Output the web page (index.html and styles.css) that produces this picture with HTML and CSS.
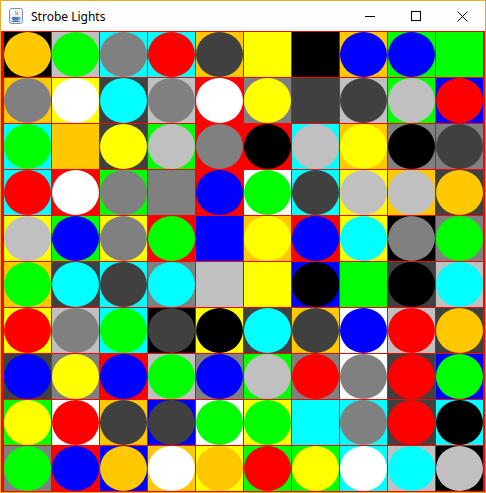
FILE: index.html
```html
<!DOCTYPE html>
<html>
<head>
<meta charset="utf-8">
<title>Strobe Lights</title>
<link rel="stylesheet" href="styles.css">
</head>
<body>
<div class="window">
  <div class="titlebar">
    <svg class="app-icon" width="16" height="16" viewBox="0 0 16 16">
      <rect x="1.5" y="0.5" width="13" height="15" rx="2" fill="#e4ecf3" stroke="#7f93a8"/>
      <rect x="2.5" y="1.5" width="11" height="6" fill="#f4f8fb"/>
      <path d="M8 2.5 C6.5 4 9.5 5 7.5 7 M10 4 C9 5 10.5 6 9.5 7" fill="none" stroke="#e0702a" stroke-width="1"/>
      <path d="M4 9 L11 9 L10.5 12 C10 13 5 13 4.5 12 Z" fill="#4a78b8"/>
      <path d="M11 9.5 C12.5 9.5 12.5 11.5 10.7 11.5" fill="none" stroke="#4a78b8" stroke-width="1"/>
      <path d="M3.5 13.5 L12 13.5" stroke="#4a78b8" stroke-width="1"/>
    </svg>
    <span class="title">Strobe Lights</span>
    <div class="controls">
      <div class="ctl"><svg width="10" height="10" viewBox="0 0 10 10"><path d="M0 5.5 H10" stroke="#000" stroke-width="1"/></svg></div>
      <div class="ctl"><svg width="10" height="10" viewBox="0 0 10 10"><rect x="0.5" y="0.5" width="9" height="9" fill="none" stroke="#000" stroke-width="1"/></svg></div>
      <div class="ctl"><svg width="11" height="11" viewBox="0 0 11 11"><path d="M0.5 0.5 L10.5 10.5 M10.5 0.5 L0.5 10.5" stroke="#000" stroke-width="1"/></svg></div>
    </div>
  </div>
  <div class="grid">
    <!-- row 0 -->
    <div class="cell bk"><i class="dot or"></i></div>
    <div class="cell lg"><i class="dot gn"></i></div>
    <div class="cell cy"><i class="dot gr"></i></div>
    <div class="cell cy"><i class="dot rd"></i></div>
    <div class="cell or"><i class="dot dg"></i></div>
    <div class="cell ye"><i class="dot ye"></i></div>
    <div class="cell bk"><i class="dot bk"></i></div>
    <div class="cell or"><i class="dot bl"></i></div>
    <div class="cell gn"><i class="dot bl"></i></div>
    <div class="cell gn"><i class="dot gn"></i></div>
    <!-- row 1 -->
    <div class="cell or"><i class="dot gr"></i></div>
    <div class="cell ye"><i class="dot wh"></i></div>
    <div class="cell dg"><i class="dot cy"></i></div>
    <div class="cell lg"><i class="dot gr"></i></div>
    <div class="cell rd"><i class="dot wh"></i></div>
    <div class="cell gr"><i class="dot ye"></i></div>
    <div class="cell dg"><i class="dot dg"></i></div>
    <div class="cell lg"><i class="dot dg"></i></div>
    <div class="cell gn"><i class="dot lg"></i></div>
    <div class="cell bl"><i class="dot rd"></i></div>
    <!-- row 2 -->
    <div class="cell cy"><i class="dot gn"></i></div>
    <div class="cell or"><i class="dot or"></i></div>
    <div class="cell dg"><i class="dot ye"></i></div>
    <div class="cell gn"><i class="dot lg"></i></div>
    <div class="cell rd"><i class="dot gr"></i></div>
    <div class="cell rd"><i class="dot bk"></i></div>
    <div class="cell cy"><i class="dot lg"></i></div>
    <div class="cell or"><i class="dot ye"></i></div>
    <div class="cell gr"><i class="dot bk"></i></div>
    <div class="cell gr"><i class="dot dg"></i></div>
    <!-- row 3 -->
    <div class="cell cy"><i class="dot rd"></i></div>
    <div class="cell rd"><i class="dot wh"></i></div>
    <div class="cell gn"><i class="dot gr"></i></div>
    <div class="cell gr"><i class="dot gr"></i></div>
    <div class="cell rd"><i class="dot bl"></i></div>
    <div class="cell wh"><i class="dot gn"></i></div>
    <div class="cell cy"><i class="dot dg"></i></div>
    <div class="cell ye"><i class="dot lg"></i></div>
    <div class="cell or"><i class="dot lg"></i></div>
    <div class="cell dg"><i class="dot or"></i></div>
    <!-- row 4 -->
    <div class="cell ye"><i class="dot lg"></i></div>
    <div class="cell gn"><i class="dot bl"></i></div>
    <div class="cell ye"><i class="dot gr"></i></div>
    <div class="cell rd"><i class="dot gn"></i></div>
    <div class="cell bl"><i class="dot bl"></i></div>
    <div class="cell or"><i class="dot ye"></i></div>
    <div class="cell rd"><i class="dot bl"></i></div>
    <div class="cell ye"><i class="dot cy"></i></div>
    <div class="cell bk"><i class="dot gr"></i></div>
    <div class="cell gr"><i class="dot gn"></i></div>
    <!-- row 5 -->
    <div class="cell or"><i class="dot gn"></i></div>
    <div class="cell dg"><i class="dot cy"></i></div>
    <div class="cell cy"><i class="dot dg"></i></div>
    <div class="cell gr"><i class="dot cy"></i></div>
    <div class="cell lg"><i class="dot lg"></i></div>
    <div class="cell ye"><i class="dot ye"></i></div>
    <div class="cell bl"><i class="dot bk"></i></div>
    <div class="cell gn"><i class="dot gn"></i></div>
    <div class="cell dg"><i class="dot bk"></i></div>
    <div class="cell lg"><i class="dot cy"></i></div>
    <!-- row 6 -->
    <div class="cell ye"><i class="dot rd"></i></div>
    <div class="cell lg"><i class="dot gr"></i></div>
    <div class="cell cy"><i class="dot gn"></i></div>
    <div class="cell bk"><i class="dot dg"></i></div>
    <div class="cell ye"><i class="dot bk"></i></div>
    <div class="cell dg"><i class="dot cy"></i></div>
    <div class="cell or"><i class="dot dg"></i></div>
    <div class="cell wh"><i class="dot bl"></i></div>
    <div class="cell lg"><i class="dot rd"></i></div>
    <div class="cell dg"><i class="dot or"></i></div>
    <!-- row 7 -->
    <div class="cell dg"><i class="dot bl"></i></div>
    <div class="cell gr"><i class="dot ye"></i></div>
    <div class="cell rd"><i class="dot bl"></i></div>
    <div class="cell lg"><i class="dot gn"></i></div>
    <div class="cell gr"><i class="dot bl"></i></div>
    <div class="cell gn"><i class="dot lg"></i></div>
    <div class="cell gr"><i class="dot rd"></i></div>
    <div class="cell wh"><i class="dot gr"></i></div>
    <div class="cell dg"><i class="dot rd"></i></div>
    <div class="cell bl"><i class="dot gn"></i></div>
    <!-- row 8 -->
    <div class="cell gn"><i class="dot ye"></i></div>
    <div class="cell wh"><i class="dot rd"></i></div>
    <div class="cell or"><i class="dot dg"></i></div>
    <div class="cell bl"><i class="dot dg"></i></div>
    <div class="cell wh"><i class="dot gn"></i></div>
    <div class="cell ye"><i class="dot gn"></i></div>
    <div class="cell cy"><i class="dot cy"></i></div>
    <div class="cell cy"><i class="dot gr"></i></div>
    <div class="cell dg"><i class="dot rd"></i></div>
    <div class="cell cy"><i class="dot bk"></i></div>
    <!-- row 9 -->
    <div class="cell gr"><i class="dot gn"></i></div>
    <div class="cell rd"><i class="dot bl"></i></div>
    <div class="cell bl"><i class="dot or"></i></div>
    <div class="cell or"><i class="dot wh"></i></div>
    <div class="cell ye"><i class="dot or"></i></div>
    <div class="cell gn"><i class="dot rd"></i></div>
    <div class="cell gn"><i class="dot ye"></i></div>
    <div class="cell cy"><i class="dot wh"></i></div>
    <div class="cell lg"><i class="dot cy"></i></div>
    <div class="cell bk"><i class="dot lg"></i></div>
  </div>
</div>
</body>
</html>
```
FILE: styles.css
```css
html, body {
  margin: 0;
  padding: 0;
  background: #fff;
}

.window {
  width: 484px;
  height: 491px;
  border: 1px solid #e9ab2a;
  display: flex;
  flex-direction: column;
  background: #fff;
}

.titlebar {
  height: 30px;
  display: flex;
  align-items: center;
  flex: none;
}

.app-icon {
  margin-left: 7px;
  flex: none;
}

.title {
  margin-left: 7px;
  font-family: "Noto Sans", "Open Sans", sans-serif;
  font-size: 12px;
  color: #000;
  line-height: 16px;
  padding-top: 1px;
}

.controls {
  margin-left: auto;
  display: flex;
  height: 30px;
}

.ctl {
  width: 46px;
  height: 30px;
  display: flex;
  align-items: center;
  justify-content: center;
}

.ctl svg {
  display: block;
}

.grid {
  background: #ff0000;
  padding: 1px 2px 1px 3px;
  display: grid;
  grid-template-columns: repeat(10, 47px);
  grid-template-rows: repeat(10, 45px);
  gap: 1px;
}

.cell {
  display: flex;
}

.dot {
  display: block;
  width: 100%;
  height: 100%;
  border-radius: 50%;
}

.bk { background: #000000; }
.bl { background: #0000ff; }
.cy { background: #00ffff; }
.dg { background: #404040; }
.gr { background: #808080; }
.gn { background: #00ff00; }
.lg { background: #c0c0c0; }
.or { background: #ffc800; }
.rd { background: #ff0000; }
.wh { background: #ffffff; }
.ye { background: #ffff00; }
```
